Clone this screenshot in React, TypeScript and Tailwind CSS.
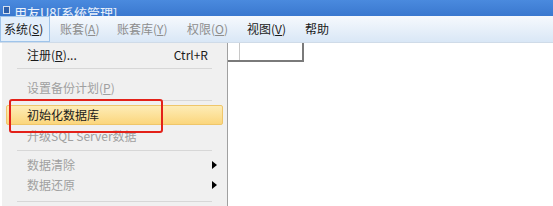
import React from "react";

const FONT = { fontFamily: '"Noto Sans CJK SC", "Noto Sans", sans-serif' };

type MenuItem = {
  label: string;
  key: string;
  w: string;
  disabled?: boolean;
};

const MENUS: MenuItem[] = [
  { label: "账套", key: "A", w: "w-[57px]", disabled: true },
  { label: "账套库", key: "Y", w: "w-[70px]", disabled: true },
  { label: "权限", key: "O", w: "w-[60px]", disabled: true },
  { label: "视图", key: "V", w: "w-[58px]" },
];

function Arrow() {
  return (
    <svg width={5} height={8} viewBox="0 0 5 8" className="mr-[10px]">
      <path d="M0 0L5 4L0 8Z" fill="#000" />
    </svg>
  );
}

function Sep({ className = "" }: { className?: string }) {
  return <div className={`mx-[15px] h-px bg-[#d7d7d7] ${className}`} />;
}

export default function App() {
  return (
    <div
      className="relative h-[206px] w-[553px] overflow-hidden bg-white text-[12px]"
      style={FONT}
    >
      {/* title bar */}
      <div className="flex h-[16px] items-end overflow-hidden bg-gradient-to-b from-[#4a8ade] to-[#3a78cf] pl-[3px]">
        <div className="mb-[2px] h-[8px] w-[7px] border border-white/80 bg-[#2e5fa8]" />
        <span className="ml-[4px] mb-[-6px] text-[13px] leading-[18px] text-white/90">
          用友U8[系统管理]
        </span>
      </div>

      {/* menu bar */}
      <div className="flex h-[27px] items-stretch border-b border-[#cfdbe8] bg-gradient-to-b from-[#f6f9fd] to-[#d9e7f6]">
        <div className="flex w-[50px] items-center border border-[#9fc4ea] bg-[#e3effb] pl-[3px] text-[#1a1a1a]">
          系统(<span className="underline">S</span>)
        </div>
        {MENUS.map((m) => (
          <div
            key={m.key}
            className={`flex ${m.w} items-center pl-[10px] ${
              m.disabled ? "text-[#8d8d8d]" : "text-[#1a1a1a]"
            }`}
          >
            {m.label}(<span className="underline">{m.key}</span>)
          </div>
        ))}
        <div className="flex items-center pl-[10px] text-[#1a1a1a]">帮助</div>
      </div>

      {/* content under the menu */}
      <div className="flex">
        <div className="flex h-[19px] w-[304px] border-b-2 border-r-2 border-[#7a7a7a]">
          <div className="w-[240px] border-r border-[#c8c8c8]" />
        </div>
      </div>

      {/* dropdown menu */}
      <div className="absolute left-0 top-[43px] flex h-[163px] w-[228px] flex-col border-l-2 border-r border-l-white border-r-[#a0a0a0] bg-[#f0f0f0] pt-[2px] text-[#1a1a1a]">
        <div className="flex h-[20px] items-center justify-between pl-[25px] pr-[19px]">
          <span>
            注册(<span className="underline">R</span>)...
          </span>
          <span>Ctrl+R</span>
        </div>
        <Sep className="mt-[3px]" />
        <div className="mt-[9px] flex h-[20px] items-center pl-[25px] text-[#a0a0a0]">
          <span>
            设置备份计划(<span className="underline">P</span>)
          </span>
        </div>
        <Sep className="mt-[2px]" />
        <div className="ml-[4px] mr-[4px] mt-[4px] flex h-[20px] items-center rounded-[2px] border border-[#efc66a] bg-gradient-to-b from-[#fdecb6] to-[#fbd67c] pl-[20px]">
          初始化数据库
        </div>
        <div className="flex h-[22px] items-center pl-[25px] text-[#a0a0a0]">
          升级SQL Server数据
        </div>
        <Sep className="mt-[3px]" />
        <div className="mt-[4px] flex h-[20px] items-center justify-between pl-[25px] text-[#a0a0a0]">
          <span>数据清除</span>
          <Arrow />
        </div>
        <div className="flex h-[20px] items-center justify-between pl-[25px] text-[#a0a0a0]">
          <span>数据还原</span>
          <Arrow />
        </div>
        <Sep className="mt-[6px]" />
      </div>

      {/* red annotation box */}
      <div className="absolute left-[9px] top-[99px] h-[34px] w-[154px] rounded-[3px] border-2 border-[#e32119]" />
    </div>
  );
}
